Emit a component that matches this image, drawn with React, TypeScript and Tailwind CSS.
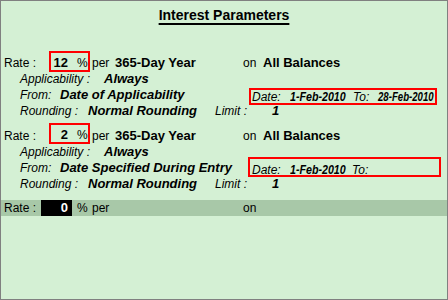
import React from "react";

const RateRow = ({ value, boxMt }: { value: string; boxMt: string }) => (
  <div className="flex items-start h-4 leading-4 pl-[3px] whitespace-nowrap">
    <span className="shrink-0 w-[45px] text-[12px]">Rate :</span>
    <span className={`shrink-0 flex items-start w-[41px] h-[21px] border-2 border-[#ff0000] pt-[2px] ${boxMt}`}>
      <span className="shrink-0 w-[17px] text-right text-[13px] font-bold leading-4">{value}</span>
      <span className="shrink-0 ml-[9px] text-[12px] leading-4">%</span>
    </span>
    <span className="shrink-0 ml-[2px] w-[23px] text-[12px]">per</span>
    <span className="shrink-0 w-[128px] text-[13px] font-bold">365-Day Year</span>
    <span className="shrink-0 w-[20px] text-[12px]">on</span>
    <span className="shrink-0 text-[13px] font-bold">All Balances</span>
  </div>
);

const DateVal = ({ children, w, sc }: { children: React.ReactNode; w: string; sc: string }) => (
  <span className={`shrink-0 ${w}`}>
    <span className={`inline-block origin-left ${sc} text-[13px] font-bold`}>{children}</span>
  </span>
);

export default function App() {
  return (
    <div className="w-[448px] h-[300px] border border-[#808080] bg-[#d4f0d4] text-black font-['Liberation_Sans',Arial,sans-serif] overflow-hidden">
      <div className="mt-[4px] h-5 leading-5 text-center">
        <span className="text-[14px] font-bold underline underline-offset-[3px] decoration-[1.5px]">
          Interest Parameters
        </span>
      </div>

      {/* Block 1 */}
      <div className="mt-[30px] flex flex-col">
        <RateRow value="12" boxMt="-mt-[4px]" />
        <div className="flex items-start h-4 leading-4 pl-[19px] italic whitespace-nowrap">
          <span className="shrink-0 w-[84px] text-[12px]">Applicability :</span>
          <span className="shrink-0 text-[13px] font-bold">Always</span>
        </div>
        <div className="flex items-start h-4 leading-4 pl-[19px] italic whitespace-nowrap">
          <span className="shrink-0 w-[40px] text-[12px]">From:</span>
          <span className="shrink-0 w-[189px] text-[13px] font-bold">Date of Applicability</span>
          <span className="shrink-0 flex items-baseline w-[188px] h-[17px] mt-[1px] border-2 border-[#ff0000] pl-[1px] leading-[12px]">
            <span className="shrink-0 w-[38px] text-[12px]">Date:</span>
            <DateVal w="w-[63px]" sc="scale-x-[0.82]">1-Feb-2010</DateVal>
            <span className="shrink-0 w-[25px] text-[12px]">To:</span>
            <DateVal w="w-[55px]" sc="scale-x-[0.74]">28-Feb-2010</DateVal>
          </span>
        </div>
        <div className="flex items-start h-4 leading-4 pl-[19px] italic whitespace-nowrap">
          <span className="shrink-0 w-[68px] text-[12px]">Rounding :</span>
          <span className="shrink-0 w-[127px] text-[13px] font-bold">Normal Rounding</span>
          <span className="shrink-0 w-[57px] text-[12px]">Limit :</span>
          <span className="shrink-0 text-[13px] font-bold">1</span>
        </div>
      </div>

      {/* Block 2 */}
      <div className="mt-[9px] flex flex-col">
        <RateRow value="2" boxMt="-mt-[5px]" />
        <div className="flex items-start h-4 leading-4 pl-[19px] italic whitespace-nowrap">
          <span className="shrink-0 w-[84px] text-[12px]">Applicability :</span>
          <span className="shrink-0 text-[13px] font-bold">Always</span>
        </div>
        <div className="flex items-start h-4 leading-4 pl-[19px] italic whitespace-nowrap">
          <span className="shrink-0 w-[40px] text-[12px]">From:</span>
          <span className="shrink-0 w-[188px] text-[13px] font-bold">Date Specified During Entry</span>
          <span className="shrink-0 flex items-baseline w-[193px] h-[20px] -mt-[3px] border-2 border-[#ff0000] pl-[2px] pt-[2px] leading-4">
            <span className="shrink-0 w-[38px] text-[12px]">Date:</span>
            <DateVal w="w-[62px]" sc="scale-x-[0.82]">1-Feb-2010</DateVal>
            <span className="shrink-0 text-[12px]">To:</span>
          </span>
        </div>
        <div className="flex items-start h-4 leading-4 pl-[19px] italic whitespace-nowrap">
          <span className="shrink-0 w-[68px] text-[12px]">Rounding :</span>
          <span className="shrink-0 w-[127px] text-[13px] font-bold">Normal Rounding</span>
          <span className="shrink-0 w-[57px] text-[12px]">Limit :</span>
          <span className="shrink-0 text-[13px] font-bold">1</span>
        </div>
      </div>

      {/* Entry row */}
      <div className="mt-[8px] flex items-start h-4 leading-4 pl-[3px] bg-[#a8c8a8] whitespace-nowrap">
        <span className="shrink-0 w-[37px] text-[12px]">Rate :</span>
        <span className="shrink-0 w-[31px] h-4 bg-black text-white text-right pr-[4px] text-[13px] font-bold">0</span>
        <span className="shrink-0 ml-[5px] w-[15px] text-[12px]">%</span>
        <span className="shrink-0 w-[151px] text-[12px]">per</span>
        <span className="shrink-0 text-[12px]">on</span>
      </div>
    </div>
  );
}
